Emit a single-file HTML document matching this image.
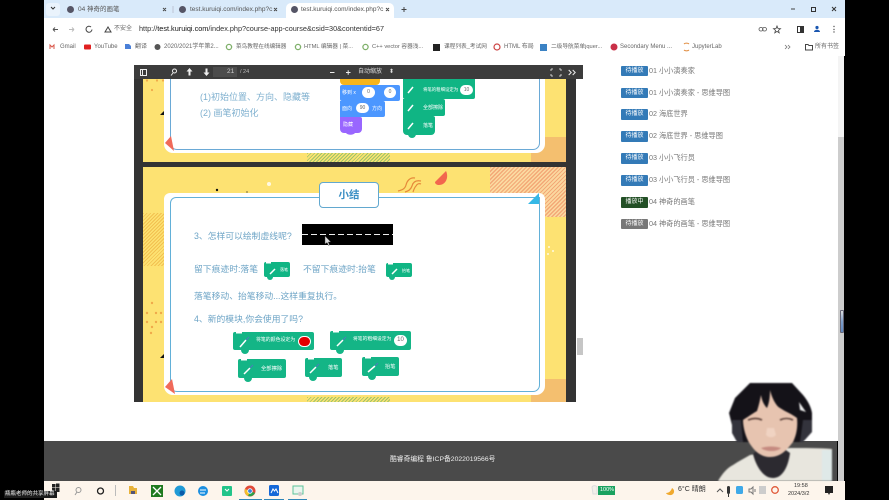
<!DOCTYPE html>
<html lang="zh"><head><meta charset="utf-8"><title>04 神奇的画笔</title>
<style>
html,body{margin:0;padding:0;background:#000;width:889px;height:500px;overflow:hidden}
#r{position:relative;width:889px;height:500px;overflow:hidden;background:#000;filter:blur(.35px);font-family:"Liberation Sans","Noto Sans CJK SC",sans-serif}
#r div,#r span.a{position:absolute;white-space:nowrap}
.t{color:#555;font-size:6.5px;line-height:10px}
.bm{color:#666;font-size:6px;line-height:10px;top:42px}
.ln{color:#6da4c6;font-size:8.800px;line-height:12px}
.bg{left:621px;width:27px;height:10.500px;border-radius:1px;color:#fff;font-size:6px;line-height:10.500px;text-align:center;background:#337ab7}
.li{left:649px;color:#777;font-size:7.200px;line-height:10px}
.tb{color:#ddd;font-size:6.5px;line-height:14px;top:65px}
</style></head><body><div id="r">
<!-- browser chrome -->
<div style="left:44px;top:0;width:801px;height:18px;background:#d9eafa"></div>
<div style="left:46px;top:3px;width:14px;height:13px;background:#eaf3fc;border-radius:3px"></div>
<div style="left:286px;top:3px;width:108px;height:15px;background:#fff;border-radius:5px 5px 0 0"></div>
<div style="left:44px;top:18px;width:801px;height:38px;background:#fff"></div>
<svg style="position:absolute;left:0;top:0" width="889" height="60">
<path d="M51 7l2 2 2-2" fill="none" stroke="#333" stroke-width="1"/>
<g fill="#556"><circle cx="70.500" cy="9.500" r="3.500"/><circle cx="182.500" cy="9.500" r="3.500"/><circle cx="294.500" cy="9.500" r="3.500"/></g>
<g stroke="#444" stroke-width=".9"><path d="M163 8l3 3M166 8l-3 3M274 8l3 3M277 8l-3 3M386 8l3 3M389 8l-3 3"/></g>
<path d="M404 7v5M401.500 9.500h5" stroke="#444" stroke-width="1"/>
<path d="M173 6v7" stroke="#aab" stroke-width=".6"/>
<path d="M791 9h4" stroke="#444" stroke-width="1"/><rect x="811.500" y="7.500" width="4" height="4" fill="none" stroke="#333"/><path d="M832 7l4 4M836 7l-4 4" stroke="#333" stroke-width="1"/>
<path d="M53 29.500h5M53 29.500l2-2M53 29.500l2 2" stroke="#555" fill="none"/><path d="M69 29.500h5M74 29.500l-2-2M74 29.500l-2 2" stroke="#bbb" fill="none"/>
<path d="M91 27a3 3 0 1 0 1 2.500" stroke="#444" fill="none"/>
<path d="M105 32h6l-3-5z" fill="none" stroke="#444"/>
<g fill="none" stroke="#555" stroke-width=".8"><rect x="759" y="27.500" width="4" height="3.500" rx="1.700"/><rect x="762.500" y="27.500" width="4" height="3.500" rx="1.700"/></g>
<path d="M777 26l1 2.500 2.500.2-2 1.600.7 2.500-2.200-1.400-2.200 1.400.7-2.500-2-1.600 2.500-.2z" fill="none" stroke="#444" stroke-width=".8"/>
<rect x="797.500" y="26.500" width="6" height="6" fill="none" stroke="#333"/><rect x="800" y="26.500" width="3.500" height="6" fill="#333"/>
<circle cx="817" cy="27.500" r="1.600" fill="#1a56b0"/><path d="M814 32c0-3 6-3 6 0z" fill="#1a56b0"/>
<g fill="#555"><circle cx="834" cy="26.500" r=".7"/><circle cx="834" cy="29.500" r=".7"/><circle cx="834" cy="32" r=".7"/></g>
<path d="M50 49v-4l2 2 2-2v4" stroke="#d9574a" fill="none"/><rect x="84" y="44.500" width="7" height="5" rx="1" fill="#e02020"/>
<path d="M125 44h4l2 2v3h-6z" fill="#4a80d8"/><circle cx="157.500" cy="47" r="3" fill="#555"/>
<g fill="none" stroke="#7fb06a" stroke-width="1.300"><circle cx="229" cy="47" r="2.600"/><circle cx="298" cy="47" r="2.600"/><circle cx="365.500" cy="47" r="2.600"/></g>
<rect x="433" y="44" width="7" height="7" fill="#222"/><circle cx="497" cy="47" r="3" fill="none" stroke="#c44" stroke-width="1.200"/>
<rect x="540" y="44" width="7" height="7" fill="#3b82c4"/><circle cx="614" cy="47" r="3.500" fill="#c93048"/><path d="M684 44a3 2 0 0 1 5 0M684 50a3 2 0 0 0 5 0" stroke="#e08a3c" fill="none"/>
<path d="M785 45l2 2-2 2M788 45l2 2-2 2" stroke="#777" fill="none" stroke-width=".8"/>
<path d="M805.500 44.500h2.500l1 1h3.500v4.500h-7z" fill="none" stroke="#444"/>
</svg>
<div class="t" style="left:78px;top:5px">04 神奇的画笔</div>
<div class="t" style="left:190px;top:5px">test.kuruiqi.com/index.php?c</div>
<div class="t" style="left:301px;top:5px">test.kuruiqi.com/index.php?c</div>
<div class="t" style="left:114px;top:24px;font-size:6px;color:#666">不安全</div>
<div style="left:139px;top:24px;font-size:7.300px;line-height:10px;color:#333">http://<b style="font-weight:400;color:#111">test.kuruiqi.com</b>/index.php?course-app-course&amp;csid=30&amp;contentid=67</div>
<div class="bm" style="left:60px">Gmail</div><div class="bm" style="left:94px">YouTube</div><div class="bm" style="left:135px">翻译</div><div class="bm" style="left:164px">2020/2021学年第2...</div><div class="bm" style="left:236px;font-size:5.600px">菜鸟教程在线编辑器</div><div class="bm" style="left:304px;font-size:5.700px">HTML 编辑器 | 菜...</div><div class="bm" style="left:372px;font-size:5.700px">C++ vector 容器浅...</div><div class="bm" style="left:444px;font-size:5.700px">课程列表_考试网</div><div class="bm" style="left:504px">HTML 布局</div><div class="bm" style="left:551px;font-size:5.700px">二级导航菜单jquer...</div><div class="bm" style="left:620px">Secondary Menu ...</div><div class="bm" style="left:692px">JupyterLab</div><div class="bm" style="left:815px">所有书签</div>
<!-- page -->
<div style="left:44px;top:56px;width:794px;height:385px;background:#fff"></div>
<div style="left:838px;top:56px;width:6px;height:425px;background:#f4f4f4"></div>
<div style="left:838px;top:137px;width:6px;height:344px;background:#cdcdcd"></div>
<div style="left:840px;top:310px;width:4px;height:23px;background:linear-gradient(#ddd,#7e9fcb 50%,#5f88c0);border:.5px solid #667;border-radius:1px;box-sizing:border-box"></div>
<!-- pdf viewer -->
<div style="left:134px;top:65px;width:449px;height:337px;background:#333"></div>
<div style="left:576px;top:79px;width:7px;height:323px;background:#fff"></div>
<div style="left:577px;top:338px;width:6px;height:17px;background:#c6c6c6"></div>
<div style="left:134px;top:65px;width:449px;height:14px;background:#3c3c3c"></div>
<div style="left:213px;top:67px;width:24px;height:10px;background:#4c4c4c"></div>
<svg style="position:absolute;left:134px;top:65px" width="449" height="14" fill="none" stroke="#eee">
<rect x="6.500" y="4.500" width="6" height="6"/><path d="M8.500 4.500v6"/>
<circle cx="40.500" cy="6" r="2"/><path d="M39 8l-2 2.500"/>
<path d="M55.500 3l3 3.500h-2v4h-2v-4h-2zM72.500 11l-3-3.500h2v-4h2v4h2z" fill="#eee" stroke="none"/>
<path d="M196 7.500h4.500M212 7.500h4.500M214.200 5.200v4.500"/>
<path d="M417 4h2M417 4v2M425 4h2M427 4v2M417 11h2M417 9v2M425 11h2M427 9v2" stroke-width=".8"/>
<path d="M435 5l2.500 2.500-2.500 2.500M439 5l2.500 2.500-2.500 2.500" transform="translate(-.3)"/>
</svg>
<div class="tb" style="left:227px;color:#ccc;font-size:6.500px">21</div><div class="tb" style="left:240px;color:#bbb;font-size:5.500px">/ 24</div><div class="tb" style="left:358px;font-size:6px">自动缩放</div><div class="tb" style="left:389px;font-size:6px">⬍</div>
<!-- page 1 -->
<div style="left:143px;top:79px;width:423px;height:83px;background:#fde272;overflow:hidden">
 <div style="left:388px;top:58px;width:35px;height:25px;background:#f4bf6f"></div>
 <div style="left:164px;top:74px;width:83px;height:9px;background:repeating-linear-gradient(135deg,#9cc46a 0 1px,#fde272 1px 2.500px)"></div>
 <div style="left:21px;top:0;width:381px;height:74px;background:#fff;border-radius:0 0 9px 9px"></div>
 <div style="left:27px;top:-5px;width:368px;height:74px;border:1px solid #6aa9d6;border-radius:0 0 7px 7px;box-sizing:content-box"></div>
</div>
<div class="ln" style="left:200px;top:91px;color:#7fb0cf;font-size:9px">(1)初始位置、方向、隐藏等</div>
<div class="ln" style="left:200px;top:107px;color:#7fb0cf;font-size:9px">(2) 画笔初始化</div>
<!-- first page blocks -->
<div style="left:340px;top:79px;width:40px;height:6px;background:#f6b51c;border-radius:0 0 4px 4px"></div>
<div style="left:340px;top:85px;width:60px;height:16px;background:#4c97ff;border-radius:2px"></div>
<div style="left:340px;top:101px;width:45px;height:16px;background:#4c97ff;border-radius:0 2px 2px 0"></div>
<div style="left:340px;top:117px;width:22px;height:16px;background:#9966ff;border-radius:0 2px 4px 4px"></div>
<div style="left:342px;top:88px;color:#fff;font-size:5px;line-height:10px">移到 x</div><div style="left:342px;top:104px;color:#fff;font-size:5px;line-height:10px">面向</div><div style="left:372px;top:104px;color:#fff;font-size:5px;line-height:10px">方向</div><div style="left:343px;top:120px;color:#fff;font-size:5px;line-height:10px">隐藏</div>
<div style="left:362px;top:87px;width:13px;height:11px;border-radius:6px;background:#fff;color:#666;font-size:5px;line-height:11px;text-align:center">0</div>
<div style="left:384px;top:87px;width:12px;height:11px;border-radius:6px;background:#fff;color:#666;font-size:5px;line-height:11px;text-align:center">0</div>
<div style="left:356px;top:103px;width:13px;height:10px;border-radius:6px;background:#fff;color:#666;font-size:5px;line-height:10px;text-align:center">90</div>
<div style="left:403px;top:79px;width:72px;height:20px;background:#10b584;border-radius:0 0 2px 2px"></div>
<div style="left:403px;top:99px;width:42px;height:17px;background:#10b584;border-radius:0 2px 2px 0"></div>
<div style="left:403px;top:116px;width:32px;height:19px;background:#10b584;border-radius:0 2px 4px 4px"></div>
<div style="left:423px;top:85px;color:#fff;font-size:4.400px;line-height:10px">将笔的粗细设定为</div><div style="left:423px;top:103px;color:#fff;font-size:5px;line-height:10px">全部擦除</div><div style="left:423px;top:121px;color:#fff;font-size:5px;line-height:10px">落笔</div>
<div style="left:460px;top:85px;width:13px;height:10px;border-radius:6px;background:#fff;color:#666;font-size:5px;line-height:10px;text-align:center">10</div>
<!-- page 2 -->
<div style="left:143px;top:167px;width:423px;height:235px;background:#fde272;overflow:hidden">
 <div style="left:347px;top:0;width:76px;height:50px;background:repeating-linear-gradient(135deg,#f3a877 0 1.200px,#fbd9a0 1.200px 2.800px)"></div>
 <div style="left:0;top:46px;width:22px;height:53px;background:repeating-linear-gradient(135deg,#f2c050 0 1px,#fde272 1px 2.500px)"></div>
 <div style="left:388px;top:212px;width:35px;height:23px;background:#f4bf6f"></div>
 <div style="left:164px;top:230px;width:83px;height:5px;background:repeating-linear-gradient(135deg,#9cc46a 0 1px,#fde272 1px 2.500px)"></div>
 <div style="left:21px;top:26px;width:381px;height:202px;background:#fff;border-radius:6px 6px 9px 9px"></div>
 <div style="left:27px;top:30px;width:368px;height:193px;border:1px solid #62b0d8;border-radius:6px 0 7px 7px"></div>
</div>
<svg style="position:absolute;left:143px;top:79px" width="423" height="323">
<g fill="#f0a94a"><circle cx="4" cy="1.500" r="1.100"/><circle cx="14" cy="1.500" r="1.100"/><circle cx="20" cy="1.500" r="1.100"/><circle cx="9" cy="11" r="1.100"/></g>
<path d="M21 32v4h-4z" fill="#111"/>
<path d="M21 275v4h-4z" fill="#111"/>
<path d="M22 64l6-7 3 15z" fill="#f06a5a"/>
<path d="M22 308l7-8 3 15z" fill="#f06a5a"/>
<path d="M396 114l-11 11h11z" fill="#35b8e6"/>
<g fill="none" stroke="#e68a3a" stroke-width="1.200"><path d="M255 112c4-1 7-2 8-6 1-4 4-8 9-7M262 113c4-1 6-3 7-6 1-4 4-6 9-5M270 113c1-3 2-5 3-6 1-2 3-3 5-2"/></g>
<path d="M303 92C306 98 303 106 296 106 294 106 292 105 292 103z" fill="#f2664e"/>
<g fill="#f0a94a"><circle cx="9" cy="224" r="1.200"/><circle cx="4" cy="234" r="1.200"/><circle cx="13" cy="234" r="1.200"/><circle cx="18" cy="234" r="1.200"/><circle cx="4" cy="243" r="1.200"/><circle cx="13" cy="243" r="1.200"/><circle cx="18" cy="243" r="1.200"/><circle cx="9" cy="248" r="1.200"/><circle cx="8" cy="254" r="1.200"/></g>
<circle cx="74" cy="111" r="1.200" fill="#111"/><circle cx="104" cy="113" r=".6" fill="#111"/>
<g fill="#fff" opacity=".8"><circle cx="126" cy="105" r="2"/><circle cx="406" cy="168" r="1"/><circle cx="410" cy="172" r="1"/><circle cx="405" cy="175" r="1"/></g>
</svg>
<div style="left:319px;top:182px;width:58px;height:24px;border:1px solid #62a8cf;border-radius:4px;background:#fff;color:#3b8fc4;font-size:10.500px;line-height:24px;text-align:center;font-weight:700">小结</div>
<div style="left:302px;top:224px;width:91px;height:21px;background:#000"></div>
<div style="left:302px;top:233.500px;width:91px;height:1px;background:repeating-linear-gradient(90deg,#eee 0 6px,transparent 6px 9px)"></div>
<svg style="position:absolute;left:324px;top:236px" width="8" height="10"><path d="M1 0v8l2-1.500 1.500 3 1-.5-1.200-3h2.500z" fill="#ddd" stroke="#333" stroke-width=".4"/></svg>
<div class="ln" style="left:194px;top:230px">3、怎样可以绘制虚线呢?</div>
<div class="ln" style="left:194px;top:263px">留下痕迹时:落笔</div>
<div class="ln" style="left:303px;top:263px">不留下痕迹时:抬笔</div>
<div class="ln" style="left:194px;top:290px">落笔移动、抬笔移动...这样重复执行。</div>
<div class="ln" style="left:194px;top:313px">4、新的模块,你会使用了吗?</div>
<!-- green blocks -->
<div style="left:264px;top:262px;width:26px;height:15px;background:#10b584;border-radius:2px"></div>
<div style="left:386px;top:263px;width:26px;height:14px;background:#10b584;border-radius:2px"></div>
<div style="left:233px;top:332px;width:81px;height:18px;background:#14b586;border-radius:2px"></div>
<div style="left:330px;top:331px;width:81px;height:19px;background:#14b586;border-radius:2px"></div>
<div style="left:238px;top:359px;width:48px;height:19px;background:#14b586;border-radius:2px"></div>
<div style="left:305px;top:358px;width:37px;height:19px;background:#14b586;border-radius:2px"></div>
<div style="left:362px;top:357px;width:37px;height:19px;background:#14b586;border-radius:2px"></div>
<svg style="position:absolute;left:0;top:0" width="889" height="500" fill="none" stroke="#fff" stroke-width="1.500">
<g fill="#fff" stroke="none"><rect x="236" y="332" width="6" height="1.500"/><rect x="333" y="331" width="6" height="1.500"/><rect x="241" y="359" width="6" height="1.500"/><rect x="308" y="358" width="6" height="1.500"/><rect x="365" y="357" width="6" height="1.500"/><rect x="266" y="262" width="5" height="1.500"/><rect x="388" y="263" width="5" height="1.500"/></g>
<g fill="#14b586" stroke="none"><circle cx="245" cy="350" r="4"/><circle cx="340" cy="350" r="4"/><circle cx="248" cy="378" r="4"/><circle cx="313" cy="377" r="4"/><circle cx="372" cy="376" r="4"/><circle cx="270" cy="277" r="3"/><circle cx="392" cy="277" r="3"/><circle cx="412" cy="134" r="4"/></g>
<path d="M270 274l5-5M392 274l5-5M240 347l6-7M337 346l6-6M244 374l6-6M310 373l6-6M368 372l7-6M408 93l5-6M408 111l5-6M408 129l5-6"/>
<path d="M246 340l3-3M343 340l3-3M250 368l3-3M316 367l3-3M375 366l3-3" stroke="#4a7fb8" stroke-width="1.200"/>
<path d="M346 133a5 3 0 0 0 9 0z" fill="#9966ff" stroke="none"/>
</svg>
<div style="left:280px;top:265px;color:#fff;font-size:4px;line-height:9px">落笔</div><div style="left:402px;top:266px;color:#fff;font-size:4px;line-height:9px">抬笔</div>
<div style="left:256px;top:336px;color:#fff;font-size:4.900px;line-height:10px">将笔的颜色设定为</div>
<div style="left:353px;top:335px;color:#fff;font-size:4.800px;line-height:10px">将笔的粗细设定为</div>
<div style="left:261px;top:364px;color:#fff;font-size:5.300px;line-height:10px">全部擦除</div>
<div style="left:328px;top:363px;color:#fff;font-size:5.200px;line-height:10px">落笔</div>
<div style="left:385px;top:362px;color:#fff;font-size:5.200px;line-height:10px">抬笔</div>
<div style="left:298px;top:335.500px;width:13px;height:11px;border-radius:6px;background:#e60000;border:1px solid #fff;box-sizing:border-box"></div>
<div style="left:394px;top:335px;width:13px;height:11px;border-radius:6px;background:#fff;color:#666;font-size:6px;line-height:11px;text-align:center">10</div>
<!-- list -->
<div class="bg" style="top:65.500px">待播放</div><div class="li" style="top:66px">01 小小演奏家</div>
<div class="bg" style="top:87.500px">待播放</div><div class="li" style="top:87.500px">01 小小演奏家 - 思维导图</div>
<div class="bg" style="top:109px">待播放</div><div class="li" style="top:109px">02 海底世界</div>
<div class="bg" style="top:131px">待播放</div><div class="li" style="top:131px">02 海底世界 - 思维导图</div>
<div class="bg" style="top:153px">待播放</div><div class="li" style="top:153px">03 小小飞行员</div>
<div class="bg" style="top:175px">待播放</div><div class="li" style="top:175px">03 小小飞行员 - 思维导图</div>
<div class="bg" style="top:197px;background:#235026">播放中</div><div class="li" style="top:197px">04 神奇的画笔</div>
<div class="bg" style="top:218.500px;background:#777">待播放</div><div class="li" style="top:218.500px">04 神奇的画笔 - 思维导图</div>
<!-- footer -->
<div style="left:44px;top:441px;width:793px;height:40px;background:#4a4a4a"></div>
<div style="left:390px;top:455px;color:#eee;font-size:6.800px;line-height:10px">酷睿奇编程 鲁ICP备2022019566号</div>
<!-- taskbar -->
<div style="left:44px;top:481px;width:801px;height:19px;background:#fdf5ec"></div>
<svg style="position:absolute;left:0;top:481px" width="889" height="19">
<g fill="#222"><rect x="52" y="3" width="3.500" height="3.500"/><rect x="56" y="2.500" width="3.500" height="4"/><rect x="52" y="7" width="3.500" height="3.500"/><rect x="56" y="7" width="3.500" height="4"/></g>
<circle cx="78.500" cy="9" r="2.500" fill="none" stroke="#999"/><path d="M77 11l-2 3" stroke="#999"/>
<circle cx="100.500" cy="10" r="3" fill="none" stroke="#222" stroke-width="1.300"/>
<path d="M115.500 4v11" stroke="#bbb"/>
<path d="M129 5h4l1 2h3v6h-8z" fill="#e8b23a"/><rect x="131" y="10" width="4" height="3" fill="#557"/>
<rect x="151" y="4" width="12" height="12" fill="#1f7a1f"/><path d="M153 6l8 8M161 6l-8 8" stroke="#fff" stroke-width="1.300"/>
<circle cx="180" cy="10" r="5.500" fill="#1f9ad6"/><circle cx="182" cy="12" r="2.500" fill="#0b5aa8"/>
<circle cx="203" cy="10" r="5" fill="#1c8fe0"/><path d="M200 9h6M200 12h5" stroke="#fff"/>
<rect x="222" y="5" width="10" height="10" rx="1" fill="#23c48a"/><path d="M225 8l2 2 2-2" stroke="#fff" fill="none"/>
<circle cx="250" cy="10" r="5.500" fill="#e04a3a"/><path d="M250 10l5 2a5.500 5.500 0 0 1-7 3z" fill="#2ba24c"/><path d="M250 10l-5-2a5.500 5.500 0 0 0 3 7z" fill="#f3c12a"/><circle cx="250" cy="10" r="2.300" fill="#3b82e0" stroke="#fff" stroke-width=".8"/>
<rect x="269" y="4" width="10" height="11" rx="1.500" fill="#1668d8"/><path d="M271 12l2-4 1.500 2 1.500-2 2 4" stroke="#fff" fill="none"/>
<rect x="293" y="5" width="10" height="8" fill="#e9f5ee" stroke="#5cc49a"/><circle cx="300" cy="13" r="2" fill="#ccc"/>
<path d="M239 18.500h23M264 18.500h20M288 18.500h19" stroke="#2f86b8" stroke-width="1"/>
<path d="M592 6a3 3 0 0 1 5 0v7h-4z" fill="#f3efe9" stroke="#ddd"/>
<rect x="598" y="5" width="17" height="9" fill="#1aa260"/>
<path d="M672 7c-1 3-3 5-6 5 1 2 5 3 7 1 2-2 1-5-1-6z" fill="#f0a92e"/>
<path d="M717 11l3-3 3 3" stroke="#555" fill="none"/><rect x="727" y="5" width="3" height="8" rx="1.500" fill="#333"/><path d="M728.500 13v3" stroke="#333"/>
<rect x="736" y="5" width="7" height="8" rx="1.500" fill="#3fa9e8"/>
<path d="M749 8h2l2-2v7l-2-2h-2zM755 8v3" fill="none" stroke="#777"/>
<rect x="759" y="5" width="7" height="8" fill="#ccc"/>
<circle cx="775" cy="9" r="3.300" fill="none" stroke="#e05a3a" stroke-width="1.300"/>
<path d="M825 5h8v7h-3l-1 2-1-2h-3z" fill="#222"/>
</svg>
<div style="left:599px;top:486px;width:16px;color:#fff;font-size:5.500px;line-height:9px;text-align:center">100%</div>
<div style="left:678px;top:485px;color:#333;font-size:7px;line-height:10px">6°C 晴朗</div>
<div style="left:794px;top:481.500px;color:#333;font-size:5.500px;line-height:9px">19:58</div>
<div style="left:788px;top:490px;color:#333;font-size:5.500px;line-height:9px">2024/3/2</div>
<!-- webcam person -->
<svg style="position:absolute;left:710px;top:378px;filter:blur(.7px)" width="130" height="104">
<path d="M8 103C12 96 17 90 23 87 29 83 35 80 40 77L80 70C94 70 110 70 122 71V103z" fill="#e8e6de"/>
<path d="M112 72h10v31h-10z" fill="#dfe9e8"/>
<path d="M43 76c3 12 10 24 20 24 9 0 15-10 17-25L70 68H52z" fill="#2c2a30"/>
<path d="M40 5H82L93 17C98 23 101 29 102 35V52L93 64H33L27 55 22 47 19 35 25 20z" fill="#141218"/>
<path d="M22 42h9l2 22h-6l-5-9zM102 42h-9l-3 22h3l9-10z" fill="#33333c"/>
<path d="M33 42C36 40 42 36 47 33 49 27 50 22 51 17 52 23 54 27 57 30 59 25 60 20 60 12 62 20 66 28 70 30 76 34 82 36 87 40 88 50 86 58 83 64 78 70 72 79 60 79 50 79 44 72 40 66 36 60 33 50 33 42z" fill="#e7c4b0"/>
<path d="M38 42c5-2 10-2 14 0M70 42c4-2 9-2 13 0" stroke="#5a4038" stroke-width="1.600" fill="none"/>
<path d="M57 50l-1 7c3 3 7 3 10 0l-2-7z" fill="#f0d3c2"/>
<path d="M51 70c6-2 14-2 20 0-4 4-15 4-20 0z" fill="#c58a80"/>
<path d="M89 24l7 10-6-2z" fill="#eee"/>
</svg>
<div style="left:4px;top:491px;height:7px;background:#1c1c1c;color:#eee;font-size:5.500px;line-height:7px;padding:0 2px 0 1px">瓶瓶老师的共享屏幕</div>
</div></body></html>
